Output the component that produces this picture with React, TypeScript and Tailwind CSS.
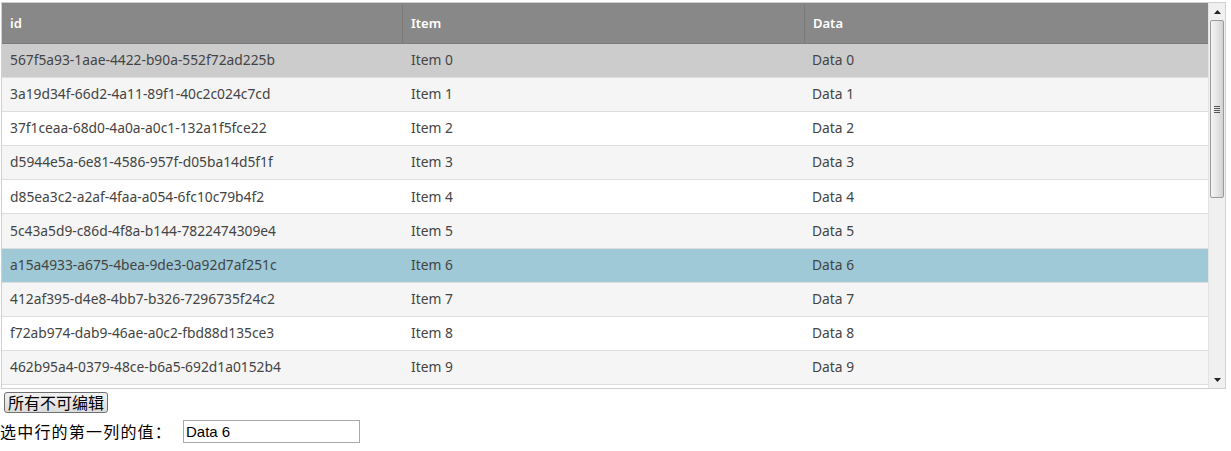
import { useState } from "react";

const rows = [
  "567f5a93-1aae-4422-b90a-552f72ad225b",
  "3a19d34f-66d2-4a11-89f1-40c2c024c7cd",
  "37f1ceaa-68d0-4a0a-a0c1-132a1f5fce22",
  "d5944e5a-6e81-4586-957f-d05ba14d5f1f",
  "d85ea3c2-a2af-4faa-a054-6fc10c79b4f2",
  "5c43a5d9-c86d-4f8a-b144-7822474309e4",
  "a15a4933-a675-4bea-9de3-0a92d7af251c",
  "412af395-d4e8-4bb7-b326-7296735f24c2",
  "f72ab974-dab9-46ae-a0c2-fbd88d135ce3",
  "462b95a4-0379-48ce-b6a5-692d1a0152b4",
  "8e1f0c22-51ab-4c3e-9b07-33d5a1c2e8f0",
];

function rowBg(i: number, selected: number) {
  if (i === selected) return "bg-[#9fc9d6]";
  if (i === 0) return "bg-[#cccccc]";
  return i % 2 === 1 ? "bg-[#f5f5f5]" : "bg-white";
}

export default function App() {
  const [selected, setSelected] = useState(6);

  return (
    <div className="text-[#333]">
      <div className="mt-[2px] ml-px w-[1225px] h-[387px] border border-[#cfcfcf] flex overflow-hidden">
        <div className="flex-1 overflow-hidden font-['Noto_Sans',sans-serif] text-[13.8px]">
          <div className="flex h-[41px] pt-[1px] bg-[#888888] text-white font-semibold text-[13px] border-b border-[#7c7c7c]">
            <div className="w-[401px] pl-[8px] flex items-center border-r border-[#7a7a7a]">id</div>
            <div className="w-[402px] pl-[8px] flex items-center border-r border-[#7a7a7a]">Item</div>
            <div className="flex-1 pl-[8px] flex items-center">Data</div>
          </div>
          {rows.map((id, i) => (
            <div
              key={id}
              onClick={() => setSelected(i)}
              className={`flex h-[34.1px] border-b border-[#dddddd] text-[#444] ${rowBg(i, selected)}`}
            >
              <div className="w-[401px] pl-[8px] flex items-center">{id}</div>
              <div className="w-[401px] pl-[8px] flex items-center">Item {i}</div>
              <div className="flex-1 pl-[8px] flex items-center">Data {i}</div>
            </div>
          ))}
        </div>
        {/* scrollbar */}
        <div className="w-[17px] bg-[#f0f0f0] border-l border-[#e3e3e3] flex flex-col items-center">
          <div className="h-[17px] w-full flex items-center justify-center">
            <svg width="7" height="4" viewBox="0 0 7 4">
              <path d="M3.5 0 L7 4 L0 4 Z" fill="#222" />
            </svg>
          </div>
          <div className="w-[14px] h-[178px] rounded-[2px] border border-[#9a9a9a] bg-gradient-to-r from-[#f4f4f4] via-[#e6e6e6] to-[#d2d2d2] flex items-center justify-center">
            <div className="flex flex-col gap-[1px]">
              <div className="w-[6px] h-px bg-[#555]" />
              <div className="w-[6px] h-px bg-[#555]" />
              <div className="w-[6px] h-px bg-[#555]" />
              <div className="w-[6px] h-px bg-[#555]" />
            </div>
          </div>
          <div className="flex-1" />
          <div className="h-[17px] w-full flex items-center justify-center">
            <svg width="7" height="4" viewBox="0 0 7 4">
              <path d="M0 0 L7 0 L3.5 4 Z" fill="#222" />
            </svg>
          </div>
        </div>
      </div>
      <div className="pl-[4px] pt-[1px] font-['Noto_Sans_CJK_SC',sans-serif] text-[16px]">
        <button className="inline-flex items-center h-[21px] px-[3px] leading-[20px] border border-[#707070] rounded-[3px] bg-gradient-to-b from-[#f2f2f2] to-[#dcdcdc] text-black">
          所有不可编辑
        </button>
      </div>
      <div className="flex items-center pt-[5px] font-['Noto_Sans_CJK_SC',sans-serif] text-[16px] text-black">
        <span className="tracking-[1.2px]">选中行的第一列的值：</span>
        <input
          readOnly
          value={`Data ${selected}`}
          className="ml-[11px] w-[177px] h-[23px] border border-[#a9a9a9] px-[2px] font-['Liberation_Sans',sans-serif] text-[15px] text-black outline-none"
        />
      </div>
    </div>
  );
}
